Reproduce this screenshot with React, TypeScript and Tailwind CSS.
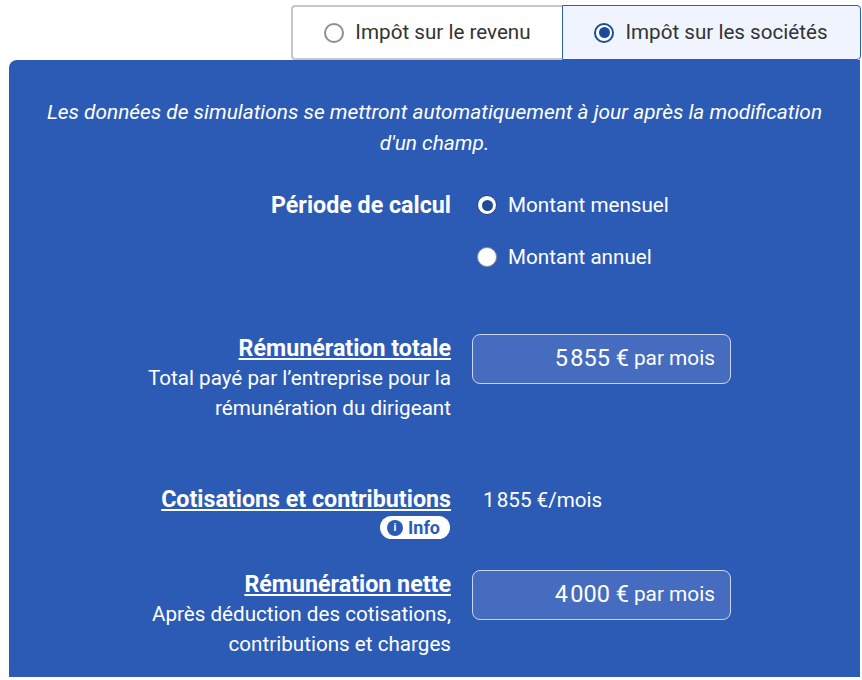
const Radio = ({ checked }: { checked: boolean }) => (
  <span className={`flex h-5 w-5 shrink-0 items-center justify-center rounded-full bg-white border-2 ${checked ? "border-[#1e4a9a]" : "border-[#8a8f99]"}`}>
    {checked && <span className="h-[11px] w-[11px] rounded-full bg-[#1e4a9a]" />}
  </span>
);

const PanelRadio = ({ checked, label }: { checked: boolean; label: string }) => (
  <div className="flex h-[24px] items-center gap-[11px]">
    <span className={`flex h-[20px] w-[20px] shrink-0 items-center justify-center rounded-full bg-white border ${checked ? "border-[#1e3f85]" : "border-[#8a8f99]"}`}>
      {checked && <span className="h-[11px] w-[11px] rounded-full bg-[#1e4a9a]" />}
    </span>
    <span>{label}</span>
  </div>
);

const Field = ({ value }: { value: string }) => (
  <div className="flex h-[50px] w-[259px] items-center justify-end rounded-lg border border-[#c9d6ee] bg-[#466cbf] pr-[15px]">
    <span className="text-[23.5px]">{value}</span>
    <span className="ml-[5px] text-[20.8px]">par mois</span>
  </div>
);

export default function App() {
  return (
    <div className="flex h-[680px] w-[862px] flex-col overflow-hidden bg-white pt-[5px] text-[20.64px] font-['Roboto',sans-serif]">
      <div className="flex h-[55px] justify-end pr-[1px]">
        <div className="flex w-[271px] items-center justify-center gap-[11px] rounded-l border-2 border-r-0 border-[#c4c7cd] bg-white text-[#333333]">
          <Radio checked={false} />
          <span>Impôt sur le revenu</span>
        </div>
        <div className="flex w-[299px] items-center justify-center gap-[11px] rounded-r border-[1.5px] border-[#2c5bb6] bg-[#eff4fe] pr-[1px] text-[#333333]">
          <Radio checked />
          <span>Impôt sur les sociétés</span>
        </div>
      </div>
      <div className="ml-[9px] mr-[2px] h-[617px] rounded-tl-lg bg-[#2c5bb6] text-white">
        <p className="px-[30px] pt-[37px] text-center text-[20.85px] italic leading-[31px]">
          Les données de simulations se mettront automatiquement à jour après la modification d'un champ.
        </p>
        <div className="mt-[28px] grid grid-cols-[442px_1fr] gap-x-[21px]">
          <div className="pt-[3px] text-right text-[23.25px] font-bold leading-[30px]">Période de calcul</div>
          <div className="flex flex-col gap-[28px] pl-[5px] pt-[6px]">
            <PanelRadio checked label="Montant mensuel" />
            <PanelRadio checked={false} label="Montant annuel" />
          </div>

          <div className="mt-[64px] text-right leading-[30px]">
            <div className="text-[23.25px] font-bold underline decoration-2 underline-offset-2">Rémunération totale</div>
            <div>Total payé par l’entreprise pour la</div>
            <div>rémunération du dirigeant</div>
          </div>
          <div className="mt-[65px]">
            <Field value={"5\u200A855 €"} />
          </div>

          <div className="mt-[61px] flex flex-col items-end text-right">
            <div className="text-[23.25px] font-bold leading-[30px] underline decoration-2 underline-offset-2">Cotisations et contributions</div>
            <div className="mr-[1px] mt-[2px] flex h-[23px] items-center gap-[5px] rounded-full bg-white pl-[7px] pr-[10px] text-[18px] font-bold text-[#2c5bb6]">
              <span className="flex h-[16px] w-[16px] items-center justify-center rounded-full bg-[#2c5bb6] text-[11px] leading-none text-white">i</span>
              Info
            </div>
          </div>
          <div className="mt-[62px] pl-[11px] leading-[30px]">{"1\u200A855 €/mois"}</div>

          <div className="mt-[30px] text-right leading-[30px]">
            <div className="text-[23.25px] font-bold underline decoration-2 underline-offset-2">Rémunération nette</div>
            <div>Après déduction des cotisations,</div>
            <div>contributions et charges</div>
          </div>
          <div className="mt-[31px]">
            <Field value={"4\u200A000 €"} />
          </div>
        </div>
      </div>
    </div>
  );
}
